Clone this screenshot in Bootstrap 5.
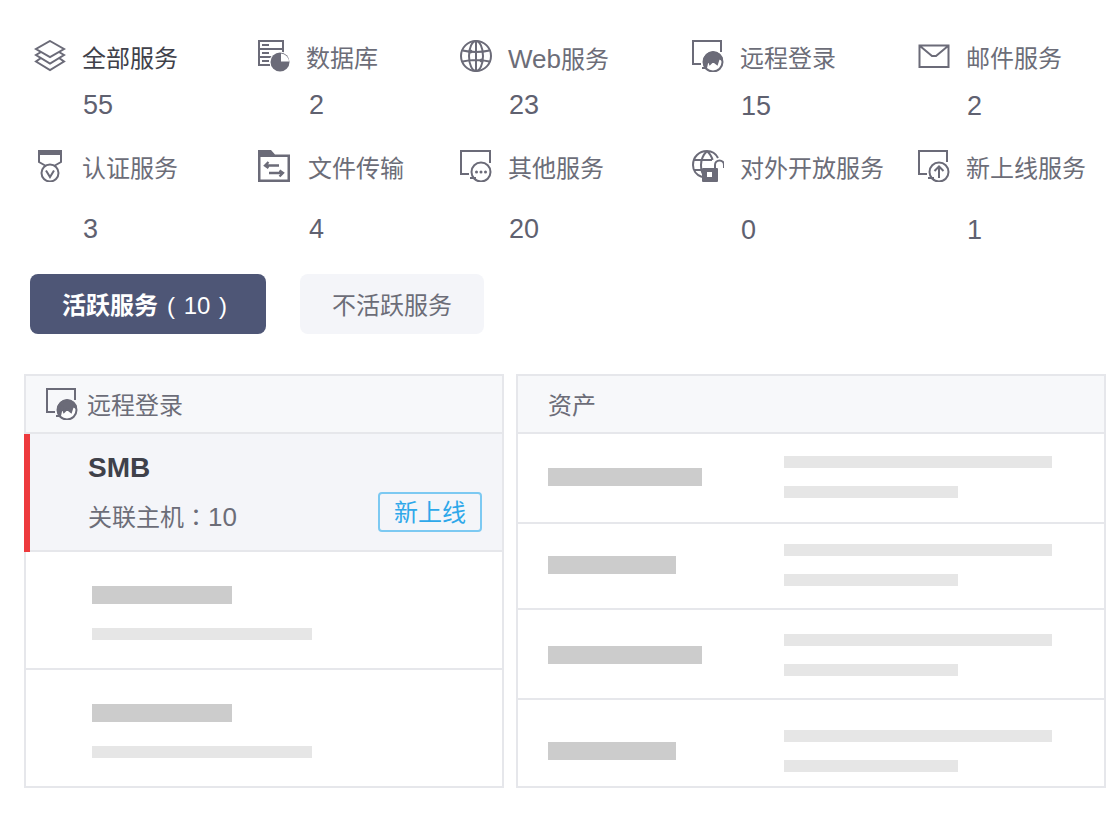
<!DOCTYPE html>
<html lang="zh-CN">
<head>
<meta charset="utf-8">
<title>服务</title>
<link href="https://cdn.jsdelivr.net/npm/bootstrap@5.3.0/dist/css/bootstrap.min.css" rel="stylesheet">
<style>
body{margin:0;background:#fff;font-family:"Liberation Sans","Noto Sans CJK SC",sans-serif;color:#6c6d78;font-size:24px;line-height:36px}
.page-wrap{padding:40px 14px 0 24px}
.svc-grid{display:grid;grid-template-columns:224px 202px 232px 226px 1fr;row-gap:26px;margin-left:10px}
.svc-tile{display:grid;grid-template-columns:32px 1fr;column-gap:16px}
.svc-tile.wide-gap{column-gap:18px}
.svc-icon{width:32px;height:32px;display:block;fill:none;stroke:#6b6b78;stroke-width:2}
.svc-icon .solid{fill:#6b6b78;stroke:none}
.svc-icon .knock{fill:#fff;stroke:none}
.svc-label{height:36px;padding-top:1px;white-space:nowrap}
.svc-label.on{color:#3f414a}
.svc-label .latin{font-size:26px}
.svc-num{grid-column:2;font-size:27px;color:#5f6170;margin-top:10px;padding-left:1px}
.svc-num.low{margin-top:12px}
.row-two .svc-num{margin-top:24px}
.row-two .svc-num.low{margin-top:26px}
.shift-num .svc-num{padding-left:3px}
.tab-row{display:flex;gap:34px;margin:26px 0 40px 6px}
.tab-btn{height:60px;border-radius:8px;border:0;font-size:24px;line-height:36px;padding:4px 32px 0;display:flex;align-items:center}
.tab-on{background:#4e5676;color:#fff;width:236px}
.tab-on:hover{background:#4e5676;color:#fff}
.tab-on b{font-weight:700}
.tab-on .cnt{margin-left:9px;white-space:pre;word-spacing:2px}
.tab-off{background:#f4f5f9;color:#6c6d78;width:184px;justify-content:center;padding:4px 0 0}
.panel-row{display:flex;gap:12px}
.svc-panel{border:2px solid #e6e7eb;--bs-card-border-radius:0;--bs-card-inner-border-radius:0;color:#6c6d78;height:414px}
.panel-left{width:480px}
.panel-right{width:590px}
.panel-head{height:58px;flex:none;background:#f7f8fa;border-bottom:2px solid #e6e7eb;padding:0;display:flex;align-items:center;border-radius:0}
.panel-left .panel-head{padding-left:20px;gap:9px}
.panel-right .panel-head{padding-left:30px}
.panel-head span{padding-top:3px}
.list-group-flush>.svc-item{border-style:solid;border-color:#e6e7eb;border-width:0 0 2px;padding:0;position:relative;background:#fff;color:inherit}
.list-group-flush>.svc-item:last-child{border-bottom-width:0}
.list-group-flush>.left-item{height:118px;padding:34px 0 0 66px}
.list-group-flush>.left-item:last-child{height:116px}
.list-group-flush>.left-item.current{background:#f4f5f9;padding:16px 20px 0 62px;display:flex;justify-content:space-between}
.left-item.current::before{content:"";position:absolute;left:-2px;top:0;bottom:-2px;width:6px;background:#ed3a3d}
.svc-title{font-weight:700;font-size:28px;line-height:36px;color:#3f414a}
.svc-sub{margin-top:12px;font-size:24px}
.svc-sub .val{font-size:26px}
.svc-sub .colon{font-family:"Noto Sans CJK TC",sans-serif}
.new-tag{align-self:flex-start;margin-top:42px;width:104px;height:40px;border:2px solid #7cc9f2;border-radius:4px;color:#2ea8ea;display:flex;align-items:center;justify-content:center;font-weight:400;font-size:24px;line-height:36px;padding:1px 0 0;background:transparent}
.bar{display:block;height:18px;background:#ccc}
.bar.thin{height:12px;background:#e6e6e6}
.w140{width:140px}.bar.w220{width:220px;margin-top:24px}
.list-group-flush>.right-item{display:flex;padding-left:30px;align-items:center}
.list-group-flush>.r1{height:90px;padding-top:22px;padding-bottom:24px}
.list-group-flush>.r2{height:86px;padding-top:20px;padding-bottom:22px}
.list-group-flush>.r3{height:90px;padding-top:24px;padding-bottom:22px}
.list-group-flush>.r4{height:86px;padding-top:30px;padding-bottom:14px}
.bar-left{width:236px;flex:none}
.w154{width:154px}.w128{width:128px}.w268{width:268px}.bar.w174{width:174px;margin-top:18px}
</style>
</head>
<body>
<svg width="0" height="0" class="d-none">
<symbol id="ic-remote" viewBox="0 0 32 32">
<path d="M29 12V1H1V24H9M10 28H17" fill="none" stroke="#6b6b78" stroke-width="2"/>
<circle cx="21" cy="22" r="9.500" fill="#fff" stroke="#6b6b78" stroke-width="2"/>
<path d="M12 21C13 15 17 12 21 12C26 12 30 16 30 20L27 18L25 24L21 21L18 24L16 19L14 28C12.500 26 12 24 12 21Z" fill="#6b6b78"/>
</symbol>
</svg>
<div class="page-wrap">
<div class="svc-grid">
<div class="svc-tile">
<svg class="svc-icon" viewBox="0 0 32 32"><path d="M16 1L30 9L16 17L2 9Z"/><path d="M7 12L2 15L16 23.500L30 15L25 12"/><path d="M7 18L2 21.500L16 30L30 21.500L25 18"/></svg>
<div class="svc-label on">全部服务</div><div class="svc-num">55</div>
</div>
<div class="svc-tile shift-num">
<svg class="svc-icon" viewBox="0 0 32 32"><path d="M1 26V1H25V15M1 9H25M1 17H14M1 25H12"/><path class="solid" d="M4 4h7v2H4zM4 12h7v2H4zM4 20h7v2H4z"/><circle cx="22" cy="22" r="10.500" class="knock"/><circle cx="22" cy="22" r="9.500" class="solid"/><path class="knock" d="M23 13.500a8.500 8.500 0 0 1 8 8h-8z"/></svg>
<div class="svc-label">数据库</div><div class="svc-num">2</div>
</div>
<div class="svc-tile">
<svg class="svc-icon" viewBox="0 0 32 32"><circle cx="16" cy="16" r="15"/><ellipse cx="16" cy="16" rx="7" ry="15"/><path d="M16 1V31M2.500 10.500Q16 13.500 29.500 10.500M2.500 21.500Q16 18.500 29.500 21.500"/><circle class="solid" cx="10.500" cy="11.500" r="2"/><circle class="solid" cx="21.500" cy="20.500" r="2"/></svg>
<div class="svc-label"><span class="latin">Web</span>服务</div><div class="svc-num">23</div>
</div>
<div class="svc-tile">
<svg class="svc-icon" viewBox="0 0 32 32"><use href="#ic-remote"/></svg>
<div class="svc-label">远程登录</div><div class="svc-num low">15</div>
</div>
<div class="svc-tile">
<svg class="svc-icon" viewBox="0 0 32 32"><path d="M1.500 5.500H30.500V27H1.500ZM2 6L14 16H18L30 6"/></svg>
<div class="svc-label">邮件服务</div><div class="svc-num low">2</div>
</div>
<div class="svc-tile row-two">
<svg class="svc-icon" viewBox="0 0 32 32"><path class="solid" d="M4 0H28V5H4z"/><path d="M5 4V12L12 16M27 4V12L20 16"/><circle cx="16" cy="23" r="8.500"/><path d="M12 20.500L16 27L20 20.500"/></svg>
<div class="svc-label">认证服务</div><div class="svc-num">3</div>
</div>
<div class="svc-tile row-two wide-gap">
<svg class="svc-icon" viewBox="0 0 32 32"><path class="solid" d="M0 0H13L17 4.500H32V7H0z"/><path stroke-width="2.500" d="M1.250 4V30.750H30.750V6"/><path stroke-width="2.300" d="M21 15.500H7M10.500 12L7 15.500L10.500 18M11 23H25M21.500 20.500L25 23L21.500 26.500"/></svg>
<div class="svc-label">文件传输</div><div class="svc-num">4</div>
</div>
<div class="svc-tile row-two">
<svg class="svc-icon" viewBox="0 0 32 32"><path d="M30 13V1H1V24H9M10 28H16"/><circle cx="21" cy="22" r="9.500"/><circle class="solid" cx="16.500" cy="22" r="1.500"/><circle class="solid" cx="21" cy="22" r="1.500"/><circle class="solid" cx="25.500" cy="22" r="1.500"/></svg>
<div class="svc-label">其他服务</div><div class="svc-num">20</div>
</div>
<div class="svc-tile row-two">
<svg class="svc-icon" viewBox="0 0 32 32"><path d="M10 27C4 25 1 20 1 15C1 7 7 1 15 1C20 1 24 4 26 8M15 1C11 5 9 10 9 15C9 20 10 24 13 27M15 1C18 4 20 7 20.500 10M2 10H20M2 20H9"/><path d="M23 18V15A4.500 4.500 0 0 1 32 15V18"/><rect class="solid" x="10" y="18" width="16" height="14" rx="1"/><rect class="knock" x="15" y="22" width="5" height="5"/></svg>
<div class="svc-label">对外开放服务</div><div class="svc-num low">0</div>
</div>
<div class="svc-tile row-two">
<svg class="svc-icon" viewBox="0 0 32 32"><path d="M29 12V1H1V24H9M10 28H16"/><circle cx="21" cy="22" r="9.500"/><path d="M21 28V17M16.500 21L21 16.500L25.500 21"/></svg>
<div class="svc-label">新上线服务</div><div class="svc-num low">1</div>
</div>
</div>

<div class="tab-row">
<button type="button" class="btn tab-btn tab-on"><b>活跃服务</b><span class="cnt">( 10 )</span></button>
<button type="button" class="btn tab-btn tab-off">不活跃服务</button>
</div>

<div class="panel-row">
<div class="card rounded-0 svc-panel panel-left">
<div class="card-header panel-head"><svg class="svc-icon" viewBox="0 0 32 32"><use href="#ic-remote"/></svg><span>远程登录</span></div>
<div class="list-group list-group-flush rounded-0">
<div class="list-group-item svc-item left-item current">
<div><div class="svc-title">SMB</div><div class="svc-sub">关联主机<span class="colon" lang="zh-TW">：</span><span class="val">10</span></div></div>
<div class="badge new-tag">新上线</div>
</div>
<div class="list-group-item svc-item left-item"><span class="bar w140"></span><span class="bar thin w220"></span></div>
<div class="list-group-item svc-item left-item"><span class="bar w140"></span><span class="bar thin w220"></span></div>
</div>
</div>
<div class="card rounded-0 svc-panel panel-right">
<div class="card-header panel-head"><span>资产</span></div>
<div class="list-group list-group-flush rounded-0">
<div class="list-group-item svc-item right-item r1"><div class="bar-left"><span class="bar w154"></span></div><div><span class="bar thin w268"></span><span class="bar thin w174"></span></div></div>
<div class="list-group-item svc-item right-item r2"><div class="bar-left"><span class="bar w128"></span></div><div><span class="bar thin w268"></span><span class="bar thin w174"></span></div></div>
<div class="list-group-item svc-item right-item r3"><div class="bar-left"><span class="bar w154"></span></div><div><span class="bar thin w268"></span><span class="bar thin w174"></span></div></div>
<div class="list-group-item svc-item right-item r4"><div class="bar-left"><span class="bar w128"></span></div><div><span class="bar thin w268"></span><span class="bar thin w174"></span></div></div>
</div>
</div>
</div>
</div>
</body>
</html>
